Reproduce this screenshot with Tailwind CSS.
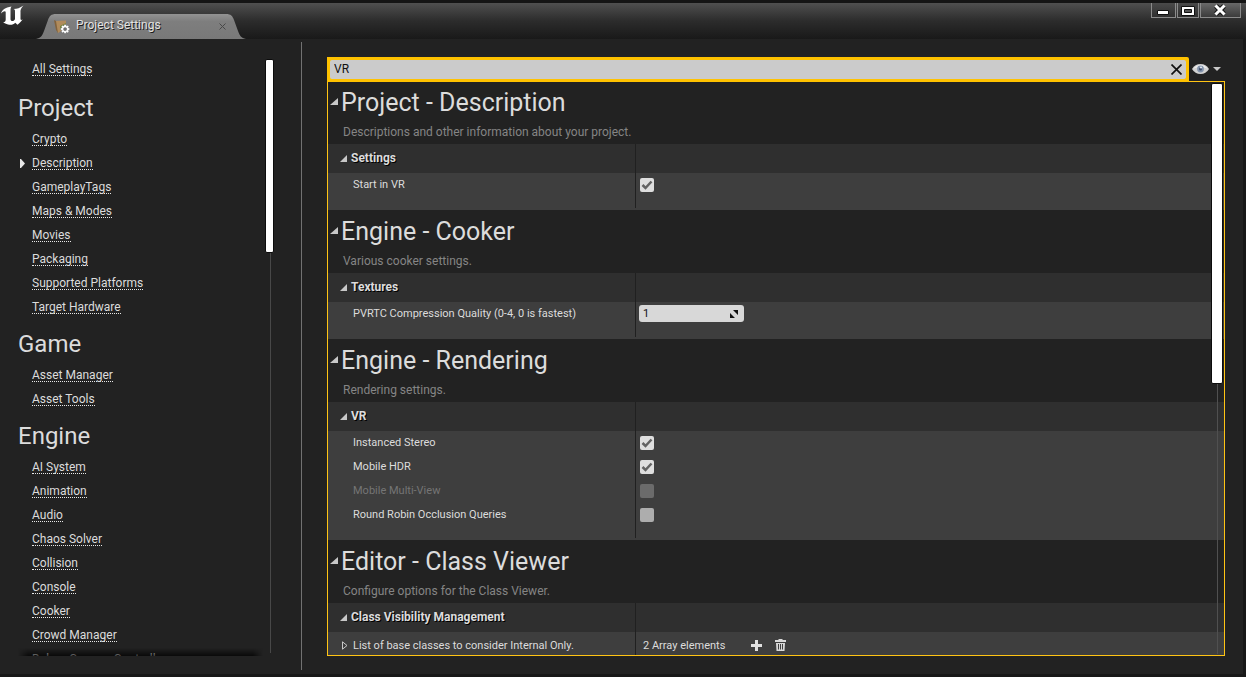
<!DOCTYPE html>
<html lang="en">
<head>
<meta charset="utf-8">
<title>Project Settings</title>
<script src="https://cdn.jsdelivr.net/npm/@tailwindcss/browser@4"></script>
</head>
<body class="bg-[#181818] font-[Roboto,sans-serif] text-xs text-[#dcdcdc]">
<div class="flex h-screen flex-col overflow-hidden pb-[3px]">

  <header class="flex h-[39px] shrink-0 items-start border-t-[3px] border-[#151515] bg-linear-to-b from-[#505050] via-[#2c2c2c] via-50% to-[#191919]">
    <svg class="h-9 w-9 shrink-0" viewBox="0 3 36 36" fill="#fff" aria-label="Unreal Engine"><path d="M1 13.500C2 10 5 7.500 11.500 6.500C10.500 8 10.500 9 10.500 10.500V19C10.500 20.500 11.500 21.200 13 21C14 20.600 14.600 20 15 19V11C15 9.800 14.600 9.300 13.500 9C17 9 20 8 23.500 5.500C20.800 8.500 20.500 10 20.500 12V18.500C20.500 20 21 20.300 22.700 19.300C21 22 19 23.500 17.500 24.700L15.200 22.700C13.500 24.700 11 25.200 8 24.500C6 23.700 4.500 23.300 3.200 22.200C5 22.200 5.700 21 5.700 19.500V12C5.700 10.800 3.500 10.500 1 13.500Z"/></svg>
    <div class="relative mt-[11px] flex h-[25px] w-[210px] items-center pr-4 pl-[18px]">
      <svg class="absolute inset-0 h-full w-full" viewBox="0 0 210 25" preserveAspectRatio="none"><defs><linearGradient id="tab" x2="0" y2="1"><stop offset="0" stop-color="#939393"/><stop offset=".3" stop-color="#7e7e7e"/><stop offset="1" stop-color="#797979"/></linearGradient></defs><path fill="url(#tab)" d="M0 25C5 24 6 22 8 17L12 6C13.500 2 15 0 20 0H190C195 0 196.500 2 198 6L202 17C204 22 205 24 210 25Z"/></svg>
      <svg class="relative h-4 w-4" viewBox="0 0 16 16"><path fill="#81623d" d="M0 1L4 3V14L2 11Z"/><path fill="#b08b5c" d="M2 2L12 1.500V9L4 14Z"/><path fill="#7a8a35" d="M6 7L12 4V9L6 11Z"/><g fill="#fff" stroke="#555" stroke-width=".4"><path d="M10.200 5.500h2l.3 1.400 1.200-.7 1.200 1.300-.8 1.200 1.600.4v1.900l-1.500.4.8 1.200-1.300 1.300-1.200-.8-.4 1.500h-1.900l-.4-1.500-1.200.8-1.300-1.300.8-1.200-1.600-.4V9.100l1.500-.4-.7-1.200 1.300-1.300 1.200.7Z"/><circle cx="11.100" cy="10.100" r="1.600" fill="#707070"/></g></svg>
      <span class="relative ml-[6px] flex-1 pb-1 leading-4 text-[#e2e2e2] [text-shadow:1px_1px_0_#1c1c1c]">Project Settings</span>
      <button class="relative grid h-4 w-4 place-items-center" aria-label="Close tab"><svg class="h-[7px] w-[7px]" viewBox="0 0 7 7"><path stroke="#484848" d="M.5.5l6 6m0-6l-6 6"/></svg></button>
    </div>
    <div class="mr-[5px] ml-auto flex gap-px">
      <button class="grid h-[15px] w-[25px] place-items-center border border-t-0 border-[#8b8b8b] bg-linear-to-b from-[#4a4a4a] to-[#303030]" aria-label="Minimize"><svg class="h-[13px] w-[13px]" viewBox="0 0 13 13"><path fill="#fff" stroke="#111" d="M.5 6.500h11v4H.5Z"/></svg></button>
      <button class="grid h-[15px] w-[22px] place-items-center border border-t-0 border-[#8b8b8b] bg-linear-to-b from-[#4a4a4a] to-[#303030]" aria-label="Maximize"><svg class="h-[13px] w-[14px]" viewBox="0 0 14 13"><path fill="#fff" stroke="#111" d="M.5 2.500h13v9H.5Z"/><path fill="#555" stroke="#111" d="M3.500 5.500h7v3h-7Z"/></svg></button>
      <button class="grid h-[15px] w-[41px] place-items-center border border-t-0 border-[#8b8b8b] bg-linear-to-b from-[#696969] to-[#3c3c3c]" aria-label="Close"><svg class="h-[13px] w-[13px]" viewBox="0 0 13 13"><path fill="none" stroke="#111" stroke-width="5" d="M2 2l8 8m0-8l-8 8"/><path fill="none" stroke="#fff" stroke-width="3" d="M1.500 1.500l9 9m0-9l-9 9"/></svg></button>
    </div>
  </header>

  <div class="mr-[3px] flex min-h-0 flex-1 bg-[#222222]">
    <nav class="relative mt-[18px] mb-[18px] ml-[18px] w-[257px] shrink-0 overflow-hidden">
      <ul class="pl-[14px]">
        <li class="flex h-6 items-center"><a href="#" class="border-b border-dotted border-[#e8e8e8] pt-px leading-3">All Settings</a></li>
      </ul>
      <h2 class="mt-[2px] flex h-11 items-center pt-[6px] text-2xl leading-7">Project</h2>
      <ul class="pl-[14px]">
        <li class="flex h-6 items-center"><a href="#" class="border-b border-dotted border-[#e8e8e8] pt-px leading-3">Crypto</a></li>
        <li class="-ml-3 flex h-6 items-center"><svg class="mr-[7px] h-[9px] w-[5px]" viewBox="0 0 5 9"><path fill="#e8e8e8" d="M0 0h1l4 4.500-4 4.500H0Z"/></svg><a href="#" class="border-b border-dotted border-[#e8e8e8] pt-px leading-3">Description</a></li>
        <li class="flex h-6 items-center"><a href="#" class="border-b border-dotted border-[#e8e8e8] pt-px leading-3">GameplayTags</a></li>
        <li class="flex h-6 items-center"><a href="#" class="border-b border-dotted border-[#e8e8e8] pt-px leading-3">Maps &amp; Modes</a></li>
        <li class="flex h-6 items-center"><a href="#" class="border-b border-dotted border-[#e8e8e8] pt-px leading-3">Movies</a></li>
        <li class="flex h-6 items-center"><a href="#" class="border-b border-dotted border-[#e8e8e8] pt-px leading-3">Packaging</a></li>
        <li class="flex h-6 items-center"><a href="#" class="border-b border-dotted border-[#e8e8e8] pt-px leading-3">Supported Platforms</a></li>
        <li class="flex h-6 items-center"><a href="#" class="border-b border-dotted border-[#e8e8e8] pt-px leading-3">Target Hardware</a></li>
      </ul>
      <h2 class="flex h-11 items-center pt-[6px] text-2xl leading-7">Game</h2>
      <ul class="pl-[14px]">
        <li class="flex h-6 items-center"><a href="#" class="border-b border-dotted border-[#e8e8e8] pt-px leading-3">Asset Manager</a></li>
        <li class="flex h-6 items-center"><a href="#" class="border-b border-dotted border-[#e8e8e8] pt-px leading-3">Asset Tools</a></li>
      </ul>
      <h2 class="flex h-11 items-center pt-[6px] text-2xl leading-7">Engine</h2>
      <ul class="pl-[14px]">
        <li class="flex h-6 items-center"><a href="#" class="border-b border-dotted border-[#e8e8e8] pt-px leading-3">AI System</a></li>
        <li class="flex h-6 items-center"><a href="#" class="border-b border-dotted border-[#e8e8e8] pt-px leading-3">Animation</a></li>
        <li class="flex h-6 items-center"><a href="#" class="border-b border-dotted border-[#e8e8e8] pt-px leading-3">Audio</a></li>
        <li class="flex h-6 items-center"><a href="#" class="border-b border-dotted border-[#e8e8e8] pt-px leading-3">Chaos Solver</a></li>
        <li class="flex h-6 items-center"><a href="#" class="border-b border-dotted border-[#e8e8e8] pt-px leading-3">Collision</a></li>
        <li class="flex h-6 items-center"><a href="#" class="border-b border-dotted border-[#e8e8e8] pt-px leading-3">Console</a></li>
        <li class="flex h-6 items-center"><a href="#" class="border-b border-dotted border-[#e8e8e8] pt-px leading-3">Cooker</a></li>
        <li class="flex h-6 items-center"><a href="#" class="border-b border-dotted border-[#e8e8e8] pt-px leading-3">Crowd Manager</a></li>
        <li class="flex h-6 items-center"><a href="#" class="border-b border-dotted border-[#e8e8e8] pt-px leading-3">Debug Camera Controller</a></li>
      </ul>
      <div class="absolute bottom-0 left-0 h-2 w-[245px] bg-linear-to-b from-transparent to-black/70 [mask-image:linear-gradient(to_right,transparent,#000_10px,#000_235px,transparent)]"></div>
      <div class="absolute top-[2px] right-0 bottom-[3px] flex w-[9px] justify-center">
        <div class="w-px bg-[#484848]"></div>
        <div class="absolute top-0 right-px h-[194px] w-[9px] rounded-xs border border-[#0c0c0c] bg-white"></div>
      </div>
    </nav>

    <div class="mt-[3px] mb-1 ml-[26px] w-px shrink-0 bg-[#727272]"></div>

    <main class="mt-[18px] mr-[18px] mb-[18px] ml-[25px] flex min-w-0 flex-1 flex-col">
      <div class="z-10 flex h-6 shrink-0 items-center">
        <form class="flex h-[25px] min-w-0 flex-1 items-center self-start rounded-tr-xs border-[3px] border-t-2 border-[#ffc200] bg-[#ffc200]">
          <div class="flex h-[19px] w-full items-center rounded-xs bg-[#cbcbcb] pr-[2px] pl-1">
            <input type="text" value="VR" aria-label="Search settings" class="min-w-0 flex-1 bg-transparent leading-4 text-[#111] outline-none">
            <button type="button" class="grid h-4 w-4 place-items-center" aria-label="Clear search"><svg class="h-[11px] w-[11px]" viewBox="0 0 11 11"><path stroke="#111" stroke-width="1.700" d="M.5.5l10 10m0-10l-10 10"/></svg></button>
          </div>
        </form>
        <button class="mr-1 ml-[3px] flex items-center gap-1" aria-label="View options">
          <svg class="h-3 w-[17px]" viewBox="0 0 17 12"><path fill="#d2d2d2" d="M0 6Q3 1 8.500 1T17 6Q14 11 8.500 11T0 6Z"/><path fill="#eee" d="M1.500 5.500Q4 2 8.500 2T15.500 5.500Q12 4 8.500 4T1.500 5.500Z"/><circle cx="8.500" cy="6" r="3.400" fill="#8494ac"/><circle cx="8.500" cy="6" r="1.500" fill="#3d4d6b"/><circle cx="9" cy="4.500" r="1" fill="#e8eef8"/></svg>
          <svg class="h-1 w-2" viewBox="0 0 8 4"><path fill="#c8c8c8" d="M0 0h8L4 4Z"/></svg>
        </button>
      </div>

      <div class="relative min-h-0 flex-1 overflow-hidden pl-px after:pointer-events-none after:absolute after:inset-0 after:border after:border-[#ffc414]">
        <section>
          <div class="h-[63px] pt-[7px]">
            <div class="flex items-center gap-[3px] pl-[2px]"><svg class="mb-[2px] h-2 w-2" viewBox="0 0 8 8"><path fill="#c8c8c8" d="M8 0v7H0Z"/></svg><h1 class="text-[25px] leading-[30px]">Project - Description</h1></div>
            <p class="pt-[6px] pl-[15px] leading-4 text-[#858585]">Descriptions and other information about your project.</p>
          </div>
          <div class="relative bg-[#3e3e3e] pb-[13px] after:absolute after:top-0 after:bottom-[2px] after:left-[307px] after:w-px after:bg-[#202020]">
            <h2 class="flex h-[29px] items-center gap-1 bg-[#2f2f2f] pb-[2px] pl-3 font-bold [text-shadow:1px_1px_0_#000]"><svg class="mt-[2px] h-[7px] w-[7px]" viewBox="0 0 7 7"><path fill="#c8c8c8" d="M7 0v7H0Z"/></svg>Settings</h2>
            <div class="flex h-6 items-center text-[11px]"><label for="vr" class="w-[312px] pl-[25px] leading-4">Start in VR</label><span class="relative grid"><input id="vr" type="checkbox" checked class="h-[14px] w-[14px] appearance-none rounded-xs bg-[#dedede]"><svg class="pointer-events-none absolute inset-0 h-[14px] w-[14px]" viewBox="0 0 14 14"><path fill="none" stroke="#626262" stroke-width="2.500" d="M2.500 7l3 3 6-6.500"/></svg></span></div>
          </div>
        </section>

        <section>
          <div class="h-[63px] pt-[7px]">
            <div class="flex items-center gap-[3px] pl-[2px]"><svg class="mb-[2px] h-2 w-2" viewBox="0 0 8 8"><path fill="#c8c8c8" d="M8 0v7H0Z"/></svg><h1 class="text-[25px] leading-[30px]">Engine - Cooker</h1></div>
            <p class="pt-[6px] pl-[15px] leading-4 text-[#858585]">Various cooker settings.</p>
          </div>
          <div class="relative bg-[#3e3e3e] pb-[13px] after:absolute after:top-0 after:bottom-[2px] after:left-[307px] after:w-px after:bg-[#202020]">
            <h2 class="flex h-[29px] items-center gap-1 bg-[#2f2f2f] pb-[2px] pl-3 font-bold [text-shadow:1px_1px_0_#000]"><svg class="mt-[2px] h-[7px] w-[7px]" viewBox="0 0 7 7"><path fill="#c8c8c8" d="M7 0v7H0Z"/></svg>Textures</h2>
            <div class="flex h-6 items-center text-[11px]"><label for="pvrtc" class="w-[311px] pl-[25px] leading-4">PVRTC Compression Quality (0-4, 0 is fastest)</label><span class="mb-px flex h-[17px] w-[105px] items-center rounded-[3px] bg-[#d8d8d8] pr-[6px] pl-1"><input id="pvrtc" type="text" inputmode="numeric" value="1" class="min-w-0 flex-1 bg-transparent leading-4 text-[#111] outline-none"><svg class="h-2 w-2" viewBox="0 0 8 8"><path fill="#111" d="M3 0h5v5ZM0 3v5h5Z"/></svg></span></div>
          </div>
        </section>

        <section>
          <div class="h-[63px] pt-[7px]">
            <div class="flex items-center gap-[3px] pl-[2px]"><svg class="mb-[2px] h-2 w-2" viewBox="0 0 8 8"><path fill="#c8c8c8" d="M8 0v7H0Z"/></svg><h1 class="text-[25px] leading-[30px]">Engine - Rendering</h1></div>
            <p class="pt-[6px] pl-[15px] leading-4 text-[#858585]">Rendering settings.</p>
          </div>
          <div class="relative bg-[#3e3e3e] pb-[13px] after:absolute after:top-0 after:bottom-[2px] after:left-[307px] after:w-px after:bg-[#202020]">
            <h2 class="flex h-[29px] items-center gap-1 bg-[#2f2f2f] pb-[2px] pl-3 font-bold [text-shadow:1px_1px_0_#000]"><svg class="mt-[2px] h-[7px] w-[7px]" viewBox="0 0 7 7"><path fill="#c8c8c8" d="M7 0v7H0Z"/></svg>VR</h2>
            <div class="flex h-6 items-center text-[11px]"><label for="stereo" class="w-[312px] pl-[25px] leading-4">Instanced Stereo</label><span class="relative grid"><input id="stereo" type="checkbox" checked class="h-[14px] w-[14px] appearance-none rounded-xs bg-[#dedede]"><svg class="pointer-events-none absolute inset-0 h-[14px] w-[14px]" viewBox="0 0 14 14"><path fill="none" stroke="#626262" stroke-width="2.500" d="M2.500 7l3 3 6-6.500"/></svg></span></div>
            <div class="flex h-6 items-center text-[11px]"><label for="hdr" class="w-[312px] pl-[25px] leading-4">Mobile HDR</label><span class="relative grid"><input id="hdr" type="checkbox" checked class="h-[14px] w-[14px] appearance-none rounded-xs bg-[#dedede]"><svg class="pointer-events-none absolute inset-0 h-[14px] w-[14px]" viewBox="0 0 14 14"><path fill="none" stroke="#626262" stroke-width="2.500" d="M2.500 7l3 3 6-6.500"/></svg></span></div>
            <div class="flex h-6 items-center text-[11px]"><label for="multiview" class="w-[312px] pl-[25px] leading-4 text-[#757575]">Mobile Multi-View</label><input id="multiview" type="checkbox" disabled class="h-[14px] w-[14px] appearance-none rounded-xs bg-[#6b6b6b]"></div>
            <div class="flex h-6 items-center text-[11px]"><label for="occlusion" class="w-[312px] pl-[25px] leading-4">Round Robin Occlusion Queries</label><input id="occlusion" type="checkbox" class="h-[14px] w-[14px] appearance-none rounded-xs bg-[#adadad]"></div>
          </div>
        </section>

        <section>
          <div class="h-[63px] pt-[7px]">
            <div class="flex items-center gap-[3px] pl-[2px]"><svg class="mb-[2px] h-2 w-2" viewBox="0 0 8 8"><path fill="#c8c8c8" d="M8 0v7H0Z"/></svg><h1 class="text-[25px] leading-[30px]">Editor - Class Viewer</h1></div>
            <p class="pt-[6px] pl-[15px] leading-4 text-[#858585]">Configure options for the Class Viewer.</p>
          </div>
          <div class="relative bg-[#3e3e3e] pb-[13px] after:absolute after:top-0 after:bottom-[2px] after:left-[307px] after:w-px after:bg-[#202020]">
            <h2 class="flex h-[29px] items-center gap-1 bg-[#2f2f2f] pb-[2px] pl-3 font-bold [text-shadow:1px_1px_0_#000]"><svg class="mt-[2px] h-[7px] w-[7px]" viewBox="0 0 7 7"><path fill="#c8c8c8" d="M7 0v7H0Z"/></svg>Class Visibility Management</h2>
            <div class="flex h-[26px] items-center text-[11px]">
              <div class="flex w-[315px] items-center gap-[5px] pt-[2px] pl-[14px] leading-4"><svg class="mb-[2px] h-[9px] w-[6px]" viewBox="0 0 6 9"><path fill="none" stroke="#c8c8c8" d="M.5.800L5 4.500.5 8.200Z"/></svg>List of base classes to consider Internal Only.</div>
              <span class="w-[108px] pt-[2px] leading-4">2 Array elements</span>
              <button aria-label="Add element"><svg class="h-[11px] w-[11px]" viewBox="0 0 11 11"><path fill="#e0e0e0" d="M4 0h3v4h4v3H7v4H4V7H0V4h4Z"/></svg></button>
              <button class="ml-[13px]" aria-label="Remove all elements"><svg class="h-3 w-[11px]" viewBox="0 0 11 12"><path fill="#d8d8d8" d="M3.500 0h4v1H11v2H0V1h3.500ZM1 4h9l-.5 8h-8Z"/><path stroke="#3e3e3e" d="M3.500 5v5.500M5.500 5v5.500M7.500 5v5.500"/></svg></button>
            </div>
          </div>
        </section>

        <div class="absolute top-[2px] right-[2px] bottom-[2px] flex w-3 justify-center">
          <div class="w-px bg-[#505050]"></div>
          <div class="absolute top-0 h-[301px] w-3 rounded-xs border border-[#0c0c0c] bg-white"></div>
        </div>
      </div>
    </main>
  </div>
</div>
</body>
</html>
